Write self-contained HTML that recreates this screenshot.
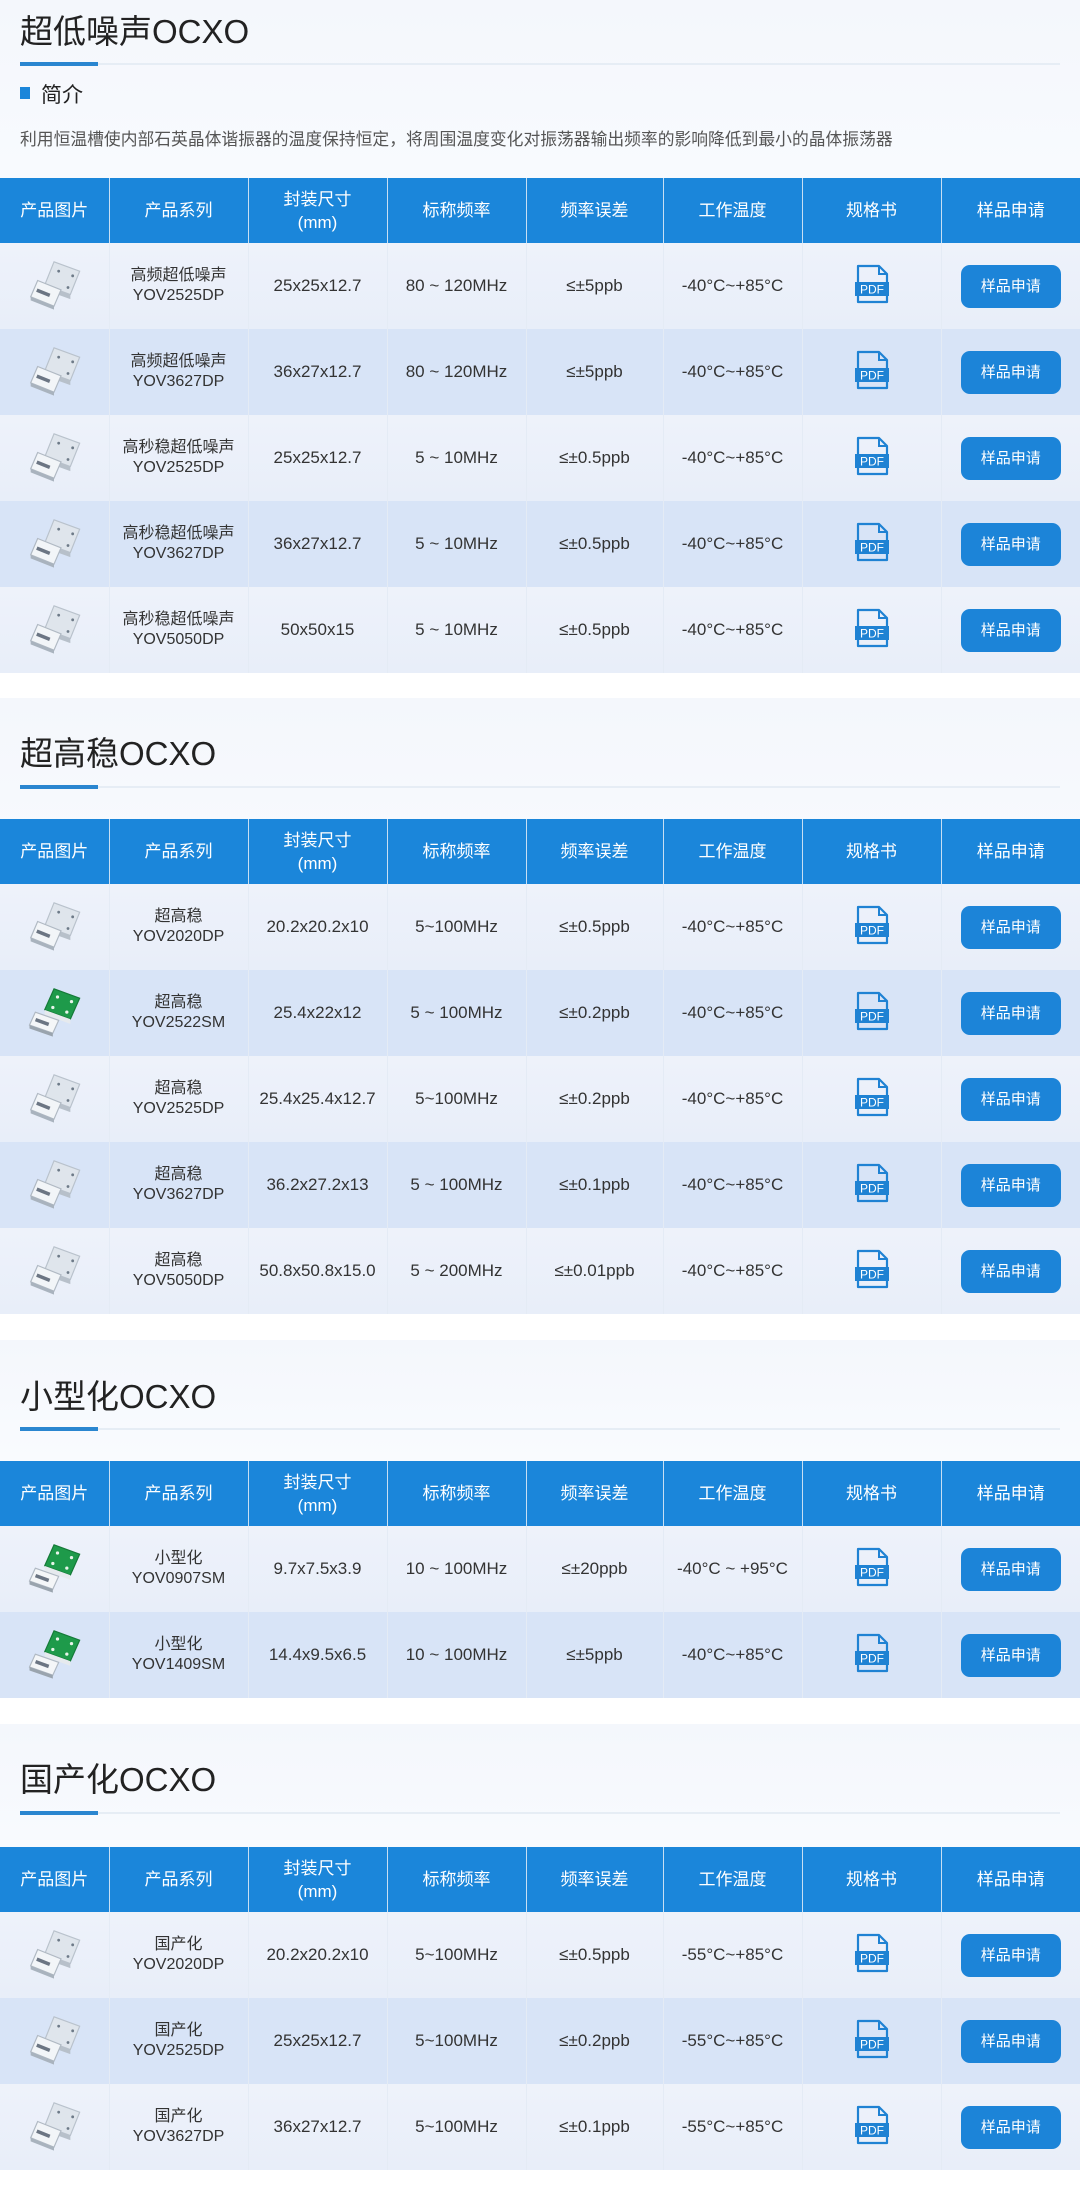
<!DOCTYPE html>
<html><head><meta charset="utf-8">
<style>
*{margin:0;padding:0;box-sizing:border-box}
body{width:1080px;height:2199px;overflow:hidden;background:#fff;font-family:"Liberation Sans","Noto Sans CJK SC",sans-serif;color:#333;position:relative}
.sec{position:absolute;left:0;width:1080px;background:linear-gradient(180deg,#f4f7fc 0%,#fafcff 40%,#f2f6fc 100%)}
.title{position:absolute;left:20px;font-size:33px;color:#222;line-height:40px;white-space:nowrap}
.ul{position:absolute;left:20px;width:1040px;height:2px;background:#e6edf5}
.ul:before{content:"";position:absolute;left:0;top:-1px;width:78px;height:4px;background:#2a86d0}
table{position:absolute;left:0;border-collapse:collapse;table-layout:fixed;width:1080px}
th{background:#1b86da;color:#fff;font-weight:normal;font-size:17px;height:65px;border-left:1px solid #c8dff3;line-height:23px}
th:first-child,td:first-child{border-left:none}
td{height:86px;text-align:center;font-size:17px;color:#333;border-left:1px solid #e4ebf5;line-height:20px}
tr.o td{background:linear-gradient(180deg,#eef2fa,#e8eef9)}
tr.e td{background:#d8e4f7}
td.s{font-size:16px}
.btn{display:inline-block;width:100px;height:43px;line-height:43px;background:#1c84d8;color:#fff;border-radius:9px;font-size:15px}
svg.c{width:70px;height:60px}
</style></head><body>

<div class="sec" style="top:0;height:672px"></div>
<div class="title" style="top:12px">超低噪声OCXO</div>
<div class="ul" style="top:63px"></div>
<div style="position:absolute;left:20px;top:87px;width:10px;height:12px;background:#1b86da"></div>
<div style="position:absolute;left:41px;top:79px;font-size:21px;color:#222">简介</div>
<div style="position:absolute;left:20px;top:126px;font-size:16.8px;color:#555;white-space:nowrap">利用恒温槽使内部石英晶体谐振器的温度保持恒定，将周围温度变化对振荡器输出频率的影响降低到最小的晶体振荡器</div>

<table style="top:178px">
<colgroup><col style="width:109px"><col style="width:139px"><col style="width:139px"><col style="width:139px"><col style="width:137px"><col style="width:139px"><col style="width:139px"><col style="width:139px"></colgroup>
<tr><th>产品图片</th><th>产品系列</th><th>封装尺寸<br>(mm)</th><th>标称频率</th><th>频率误差</th><th>工作温度</th><th>规格书</th><th>样品申请</th></tr>
<tr class="o"><td><svg class="c" viewBox="0 0 60 50"><use href="#chip"/></svg></td><td class="s">高频超低噪声<br>YOV2525DP</td><td>25x25x12.7</td><td>80 ~ 120MHz</td><td>≤±5ppb</td><td>-40°C~+85°C</td><td><svg width="40" height="42"><use href="#pdf"/></svg></td><td><span class="btn">样品申请</span></td></tr>
<tr class="e"><td><svg class="c" viewBox="0 0 60 50"><use href="#chip"/></svg></td><td class="s">高频超低噪声<br>YOV3627DP</td><td>36x27x12.7</td><td>80 ~ 120MHz</td><td>≤±5ppb</td><td>-40°C~+85°C</td><td><svg width="40" height="42"><use href="#pdf"/></svg></td><td><span class="btn">样品申请</span></td></tr>
<tr class="o"><td><svg class="c" viewBox="0 0 60 50"><use href="#chip"/></svg></td><td class="s">高秒稳超低噪声<br>YOV2525DP</td><td>25x25x12.7</td><td>5 ~ 10MHz</td><td>≤±0.5ppb</td><td>-40°C~+85°C</td><td><svg width="40" height="42"><use href="#pdf"/></svg></td><td><span class="btn">样品申请</span></td></tr>
<tr class="e"><td><svg class="c" viewBox="0 0 60 50"><use href="#chip"/></svg></td><td class="s">高秒稳超低噪声<br>YOV3627DP</td><td>36x27x12.7</td><td>5 ~ 10MHz</td><td>≤±0.5ppb</td><td>-40°C~+85°C</td><td><svg width="40" height="42"><use href="#pdf"/></svg></td><td><span class="btn">样品申请</span></td></tr>
<tr class="o"><td><svg class="c" viewBox="0 0 60 50"><use href="#chip"/></svg></td><td class="s">高秒稳超低噪声<br>YOV5050DP</td><td>50x50x15</td><td>5 ~ 10MHz</td><td>≤±0.5ppb</td><td>-40°C~+85°C</td><td><svg width="40" height="42"><use href="#pdf"/></svg></td><td><span class="btn">样品申请</span></td></tr>
</table>

<div class="sec" style="top:698px;height:616px"></div>
<div class="title" style="top:734px">超高稳OCXO</div>
<div class="ul" style="top:786px"></div>
<table style="top:819px">
<colgroup><col style="width:109px"><col style="width:139px"><col style="width:139px"><col style="width:139px"><col style="width:137px"><col style="width:139px"><col style="width:139px"><col style="width:139px"></colgroup>
<tr><th>产品图片</th><th>产品系列</th><th>封装尺寸<br>(mm)</th><th>标称频率</th><th>频率误差</th><th>工作温度</th><th>规格书</th><th>样品申请</th></tr>
<tr class="o"><td><svg class="c" viewBox="0 0 60 50"><use href="#chip"/></svg></td><td class="s">超高稳<br>YOV2020DP</td><td>20.2x20.2x10</td><td>5~100MHz</td><td>≤±0.5ppb</td><td>-40°C~+85°C</td><td><svg width="40" height="42"><use href="#pdf"/></svg></td><td><span class="btn">样品申请</span></td></tr>
<tr class="e"><td><svg class="c" viewBox="0 0 60 50"><use href="#green"/></svg></td><td class="s">超高稳<br>YOV2522SM</td><td>25.4x22x12</td><td>5 ~ 100MHz</td><td>≤±0.2ppb</td><td>-40°C~+85°C</td><td><svg width="40" height="42"><use href="#pdf"/></svg></td><td><span class="btn">样品申请</span></td></tr>
<tr class="o"><td><svg class="c" viewBox="0 0 60 50"><use href="#chip"/></svg></td><td class="s">超高稳<br>YOV2525DP</td><td>25.4x25.4x12.7</td><td>5~100MHz</td><td>≤±0.2ppb</td><td>-40°C~+85°C</td><td><svg width="40" height="42"><use href="#pdf"/></svg></td><td><span class="btn">样品申请</span></td></tr>
<tr class="e"><td><svg class="c" viewBox="0 0 60 50"><use href="#chip"/></svg></td><td class="s">超高稳<br>YOV3627DP</td><td>36.2x27.2x13</td><td>5 ~ 100MHz</td><td>≤±0.1ppb</td><td>-40°C~+85°C</td><td><svg width="40" height="42"><use href="#pdf"/></svg></td><td><span class="btn">样品申请</span></td></tr>
<tr class="o"><td><svg class="c" viewBox="0 0 60 50"><use href="#chip"/></svg></td><td class="s">超高稳<br>YOV5050DP</td><td>50.8x50.8x15.0</td><td>5 ~ 200MHz</td><td>≤±0.01ppb</td><td>-40°C~+85°C</td><td><svg width="40" height="42"><use href="#pdf"/></svg></td><td><span class="btn">样品申请</span></td></tr>
</table>

<div class="sec" style="top:1340px;height:358px"></div>
<div class="title" style="top:1377px">小型化OCXO</div>
<div class="ul" style="top:1428px"></div>
<table style="top:1461px">
<colgroup><col style="width:109px"><col style="width:139px"><col style="width:139px"><col style="width:139px"><col style="width:137px"><col style="width:139px"><col style="width:139px"><col style="width:139px"></colgroup>
<tr><th>产品图片</th><th>产品系列</th><th>封装尺寸<br>(mm)</th><th>标称频率</th><th>频率误差</th><th>工作温度</th><th>规格书</th><th>样品申请</th></tr>
<tr class="o"><td><svg class="c" viewBox="0 0 60 50"><use href="#green"/></svg></td><td class="s">小型化<br>YOV0907SM</td><td>9.7x7.5x3.9</td><td>10 ~ 100MHz</td><td>≤±20ppb</td><td>-40°C ~ +95°C</td><td><svg width="40" height="42"><use href="#pdf"/></svg></td><td><span class="btn">样品申请</span></td></tr>
<tr class="e"><td><svg class="c" viewBox="0 0 60 50"><use href="#green"/></svg></td><td class="s">小型化<br>YOV1409SM</td><td>14.4x9.5x6.5</td><td>10 ~ 100MHz</td><td>≤±5ppb</td><td>-40°C~+85°C</td><td><svg width="40" height="42"><use href="#pdf"/></svg></td><td><span class="btn">样品申请</span></td></tr>
</table>

<div class="sec" style="top:1724px;height:444px"></div>
<div class="title" style="top:1760px">国产化OCXO</div>
<div class="ul" style="top:1812px"></div>
<table style="top:1847px">
<colgroup><col style="width:109px"><col style="width:139px"><col style="width:139px"><col style="width:139px"><col style="width:137px"><col style="width:139px"><col style="width:139px"><col style="width:139px"></colgroup>
<tr><th>产品图片</th><th>产品系列</th><th>封装尺寸<br>(mm)</th><th>标称频率</th><th>频率误差</th><th>工作温度</th><th>规格书</th><th>样品申请</th></tr>
<tr class="o"><td><svg class="c" viewBox="0 0 60 50"><use href="#chip"/></svg></td><td class="s">国产化<br>YOV2020DP</td><td>20.2x20.2x10</td><td>5~100MHz</td><td>≤±0.5ppb</td><td>-55°C~+85°C</td><td><svg width="40" height="42"><use href="#pdf"/></svg></td><td><span class="btn">样品申请</span></td></tr>
<tr class="e"><td><svg class="c" viewBox="0 0 60 50"><use href="#chip"/></svg></td><td class="s">国产化<br>YOV2525DP</td><td>25x25x12.7</td><td>5~100MHz</td><td>≤±0.2ppb</td><td>-55°C~+85°C</td><td><svg width="40" height="42"><use href="#pdf"/></svg></td><td><span class="btn">样品申请</span></td></tr>
<tr class="o"><td><svg class="c" viewBox="0 0 60 50"><use href="#chip"/></svg></td><td class="s">国产化<br>YOV3627DP</td><td>36x27x12.7</td><td>5~100MHz</td><td>≤±0.1ppb</td><td>-55°C~+85°C</td><td><svg width="40" height="42"><use href="#pdf"/></svg></td><td><span class="btn">样品申请</span></td></tr>
</table>

<svg width="0" height="0" style="position:absolute">
<defs>
<g id="chip">
<polygon points="30,6 52,14 44,34 22,26" fill="#dfe5ec" stroke="#b9c2cc" stroke-width="1"/>
<polygon points="22,26 44,34 44,38 22,30" fill="#b7c0ca"/>
<polygon points="16,22 36,30 30,44 10,36" fill="#f2f5f8" stroke="#b0b9c3" stroke-width="1"/>
<polygon points="10,36 30,44 30,47 10,39" fill="#a9b3be"/>
<circle cx="34" cy="14" r="1.2" fill="#6d7a88"/><circle cx="46" cy="18" r="1.2" fill="#6d7a88"/><circle cx="42" cy="28" r="1.2" fill="#6d7a88"/>
<rect x="15" y="31" width="12" height="3" fill="#6b7583" transform="rotate(22 21 32)"/>
</g>
<g id="green">
<polygon points="30,6 52,14 44,32 22,24" fill="#1e9a4a" stroke="#157a38" stroke-width="1"/>
<polygon points="22,24 44,32 44,36 22,28" fill="#e6eaee"/>
<circle cx="33" cy="13" r="1.4" fill="#e8f4ea"/><circle cx="45" cy="17" r="1.4" fill="#e8f4ea"/><circle cx="41" cy="26" r="1.4" fill="#e8f4ea"/><circle cx="29" cy="22" r="1.4" fill="#e8f4ea"/>
<polygon points="14,26 34,33 29,44 9,37" fill="#f4f6f8" stroke="#b0b9c3" stroke-width="1"/>
<polygon points="9,37 29,44 29,47 9,40" fill="#9aa4ae"/>
<rect x="14" y="33" width="12" height="3" fill="#6b7583" transform="rotate(20 20 34)"/>
</g>
<g id="pdf">
<path d="M6 3 H27 L35 11 V39 H6 Z" fill="none" stroke="#1f82d3" stroke-width="2.2" stroke-linejoin="round"/>
<path d="M27 3 V11 H35" fill="none" stroke="#1f82d3" stroke-width="2"/>
<rect x="3" y="19" width="34" height="14" fill="#1f82d3"/>
<text x="20" y="30.5" font-family="Liberation Sans,sans-serif" font-size="12" fill="#fff" text-anchor="middle">PDF</text>
</g>
</defs>
</svg>
</body></html>
